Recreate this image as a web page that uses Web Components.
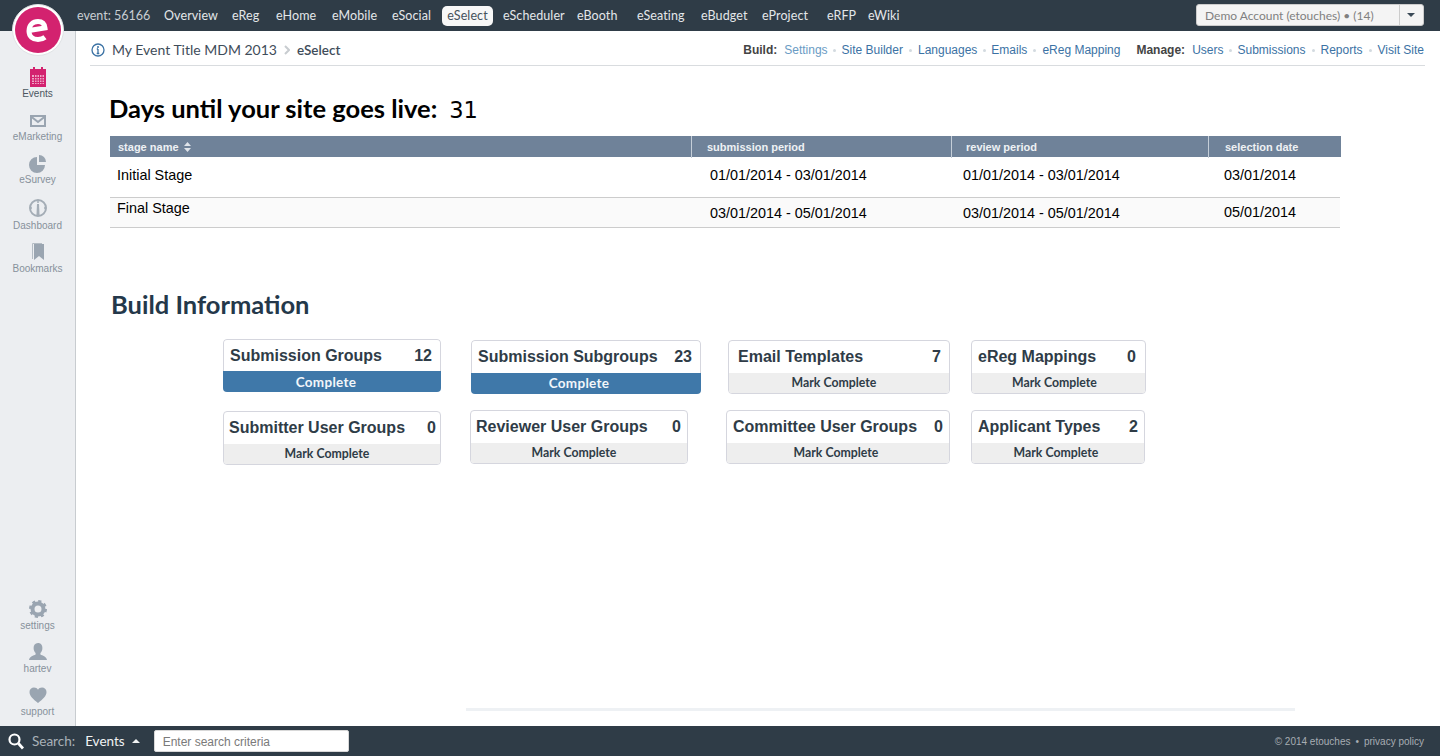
<!DOCTYPE html>
<html lang="en">
<head>
<meta charset="utf-8">
<title>eSelect</title>
<style>
    html, body { margin: 0; height: 100%; overflow: hidden; background: #fff; }
</style>
</head>
<body>
<et-app>
    <et-topbar slot="top"></et-topbar>
    <et-sidebar slot="side"></et-sidebar>
    <et-subnav slot="sub"></et-subnav>

    <et-countdown days="31">Days until your site goes live:</et-countdown>
    <et-stage-table></et-stage-table>
    <et-section-title>Build Information</et-section-title>

    <et-card-row style="margin-top: 20px">
        <et-build-card count="12" state="complete" width="218" left="147" up="1" shift="12">Submission Groups</et-build-card>
        <et-build-card count="23" state="complete" width="230" left="30" shift="14">Submission Subgroups</et-build-card>
        <et-build-card count="7" width="222" left="27" inset="9" shift="10">Email Templates</et-build-card>
        <et-build-card count="0" width="175" left="21" inset="6" trail="9" shift="8">eReg Mappings</et-build-card>
    </et-card-row>
    <et-card-row style="margin-top: 16px">
        <et-build-card count="0" width="218" left="147" down="1" inset="5" trail="4" shift="10">Submitter User Groups</et-build-card>
        <et-build-card count="0" width="218" left="29" inset="5" trail="6" shift="10">Reviewer User Groups</et-build-card>
        <et-build-card count="0" width="224" left="38" trail="6" shift="4">Committee User Groups</et-build-card>
        <et-build-card count="2" width="174" left="21" trail="6" shift="4">Applicant Types</et-build-card>
    </et-card-row>

    <et-footer-rule></et-footer-rule>
    <et-bottombar slot="bottom"></et-bottombar>
</et-app>

<script>
const SANS = '"Liberation Sans", Arial, sans-serif';
const HUMANIST = 'Lato, "Open Sans", sans-serif';

/**
 * Base class: attaches an open shadow root and fills it
 * with whatever render() returns.
 */
class EtElement extends HTMLElement {
    constructor() {
        super();
        this.$shadowDom = this.attachShadow({ mode: 'open' });
    }

    connectedCallback() {
        this.$shadowDom.innerHTML = this.render();
    }
}

// The page shell: top bar, side rail, content column, bottom bar.
class EtApp extends EtElement {
    render() {
        return `
            <style>
                :host {
                    display: grid;
                    grid-template-columns: 76px 1fr;
                    grid-template-rows: 31px 1fr 30px;
                    height: 756px;
                    font-family: ${SANS};
                }
                .top { grid-column: 1 / 3; position: relative; z-index: 2; }
                .side { grid-row: 2; min-height: 0; }
                .content { display: flex; flex-direction: column; min-height: 0; min-width: 0; }
                .bottom { grid-column: 1 / 3; }
            </style>
            <div class="top"><slot name="top"></slot></div>
            <div class="side"><slot name="side"></slot></div>
            <div class="content">
                <slot name="sub"></slot>
                <slot></slot>
            </div>
            <div class="bottom"><slot name="bottom"></slot></div>
        `;
    }
}

class EtTopbar extends EtElement {
    render() {
        // Each product tab with the width it takes up in the bar.
        const items = [['Overview', 68], ['eReg', 44], ['eHome', 56], ['eMobile', 60], ['eSocial', 50],
            ['eSelect', 51], ['eScheduler', 74], ['eBooth', 60], ['eSeating', 64], ['eBudget', 61],
            ['eProject', 65], ['eRFP', 41], ['eWiki', 40]];
        const links = items.map(([name, width]) =>
            `<a class="${name === 'eSelect' ? 'on' : ''}" style="width: ${width}px">${name}</a>`).join('');
        return `
            <style>
                :host {
                    display: flex;
                    align-items: center;
                    height: 31px;
                    padding: 0 16px 0 77px;
                    box-sizing: border-box;
                    background: #2f3c47;
                    font: 12.5px ${HUMANIST};
                    color: #e4e7ea;
                    position: relative;
                }
                .logo { position: absolute; left: 12px; top: 4px; width: 52px; height: 52px; }
                nav { display: flex; align-items: center; flex: 1; }
                a { flex: none; white-space: nowrap; letter-spacing: .1px; }
                .event { color: #c9ced3; width: 87px; letter-spacing: 0; }
                .on {
                    height: 20px;
                    margin-right: 10px;
                    line-height: 20px;
                    text-align: center;
                    background: #f7f7f7;
                    color: #46525c;
                    border-radius: 5px;
                }
                .account {
                    display: flex;
                    width: 228px;
                    height: 22px;
                    box-sizing: border-box;
                    margin-top: -1px;
                    background: #f4f4f4;
                    border: 1px solid #ccc;
                    border-radius: 3px;
                    font: 12px ${HUMANIST};
                    color: #808080;
                }
                .account span { flex: 1; padding-left: 8px; line-height: 21px; }
                .account i { width: 23px; border-left: 1px solid #ccc; position: relative; }
                .account i::after {
                    content: '';
                    position: absolute;
                    left: 7px;
                    top: 8px;
                    border: 4px solid transparent;
                    border-top: 4px solid #3b4a57;
                    border-bottom: 0;
                }
            </style>
            <svg class="logo" viewBox="0 0 52 52" aria-hidden="true">
                <circle cx="26" cy="26" r="25.5" fill="#fff" stroke="#dfe2e5"/>
                <circle cx="26" cy="26" r="23" fill="#d3226f"/>
                <path d="M17 26.500 L33 24 C32.500 19.500 29.500 17.500 26 17.500 C21 17.500 17 21 17 27 C17 32.500 21 35.500 26 35.500 C28.800 35.500 31 34.800 33 33.200" fill="none" stroke="#fff" stroke-width="5"/>
            </svg>
            <nav><a class="event">event: 56166</a>${links}</nav>
            <div class="account"><span>Demo Account (etouches) • (14)</span><i></i></div>
        `;
    }
}

// Icons of the side rail, all on a 20x20 box.
const RAIL_ICONS = {
    events: `<path fill="#d3226f" d="M2 2h3V0h2v2h6V0h2v2h3v18H2z"/>
        <path fill="#efa6c6" d="M4 8h12v9H4z"/>
        <path stroke="#d3226f" stroke-width="1" d="M4 10.500h12M4 13h12M4 15.500h12M6.500 8v9M9 8v9M11.500 8v9M14 8v9"/>`,
    mail: `<rect x="3" y="6" width="14" height="10" fill="none" stroke="#9aa5b1" stroke-width="2"/>
        <path d="M3 6.500l7 5.500 7-5.500" fill="none" stroke="#9aa5b1" stroke-width="2"/>`,
    pie: `<path fill="#9aa5b1" d="M9 4a8 8 0 1 0 8 8H9z"/><path fill="#9aa5b1" d="M11 2a7 7 0 0 1 7 7h-7z"/>`,
    gauge: `<circle cx="10" cy="9" r="8" fill="none" stroke="#a4adb6" stroke-width="2"/>
        <path d="M10 1v3M2 9h2M16 9h2" stroke="#a4adb6" stroke-width="1.500"/>
        <path d="M9 5h2l.6 12H8.400z" fill="#a4adb6"/>`,
    bookmark: `<path fill="#9aa5b1" d="M6 2h10v16l-5-4-5 4z"/><path fill="none" stroke="#b4bcc4" d="M4.500 17V1.500H14"/>`,
    gear: `<circle cx="10" cy="10" r="5.500" fill="none" stroke="#9aa5b1" stroke-width="4"/>
        <circle cx="10" cy="10" r="7.500" fill="none" stroke="#9aa5b1" stroke-width="3" stroke-dasharray="3 2.890"/>`,
    user: `<path fill="#9aa5b1" d="M10 1c3 0 4.400 2.200 4.400 5 0 2.400-1 4-2 5v1.500c2 1 6 2 6.600 5.500H1c.6-3.500 4.600-4.500 6.600-5.500V11c-1-1-2-2.600-2-5 0-2.800 1.400-5 4.400-5z"/>`,
    heart: `<path fill="#9aa5b1" d="M10 18C5 14 1.500 11 1.500 7 1.500 4 3.700 2.500 6 2.500c1.800 0 3.200.8 4 2.200.8-1.400 2.200-2.200 4-2.200 2.300 0 4.500 1.500 4.500 4.500 0 4-3.500 7-8.500 11z"/>`
};

class EtRailItem extends EtElement {
    render() {
        return `
            <style>
                :host {
                    display: flex;
                    flex-direction: column;
                    align-items: center;
                    height: 43px;
                    font: 10px/12px ${SANS};
                    color: #87919b;
                    box-sizing: border-box;
                }
                :host([active]) { color: #4b5660; }
                :host([icon="gauge"]) { margin-top: 3px; }
                svg { width: 20px; height: 20px; flex: none; margin-bottom: 1px; }
            </style>
            <svg viewBox="0 0 20 20" aria-hidden="true">${RAIL_ICONS[this.getAttribute('icon')]}</svg>
            <slot></slot>
        `;
    }
}

class EtSidebar extends EtElement {
    render() {
        return `
            <style>
                :host {
                    display: flex;
                    flex-direction: column;
                    height: 100%;
                    width: 76px;
                    box-sizing: border-box;
                    padding-top: 36px;
                    background: #eceef1;
                    border-right: 1px solid #c8ccd0;
                }
                .foot { margin-top: auto; }
                .foot et-rail-item:last-child { height: 41px; }
            </style>
            <et-rail-item icon="events" active>Events</et-rail-item>
            <et-rail-item icon="mail">eMarketing</et-rail-item>
            <et-rail-item icon="pie">eSurvey</et-rail-item>
            <et-rail-item icon="gauge">Dashboard</et-rail-item>
            <et-rail-item icon="bookmark">Bookmarks</et-rail-item>
            <div class="foot">
                <et-rail-item icon="gear">settings</et-rail-item>
                <et-rail-item icon="user">hartev</et-rail-item>
                <et-rail-item icon="heart">support</et-rail-item>
            </div>
        `;
    }
}

class EtSubnav extends EtElement {
    render() {
        return `
            <style>
                :host {
                    display: flex;
                    align-items: center;
                    height: 35px;
                    margin: 0 15px 0 14px;
                    box-sizing: border-box;
                    padding: 4px 1px 0 1px;
                    border-bottom: 1px solid #d9dcdf;
                    font: 12px ${SANS};
                    color: #3b72a4;
                }
                .crumb {
                    display: flex;
                    align-items: center;
                    flex: 1;
                    margin-top: -1px;
                    font: 14px ${HUMANIST};
                    color: #3f4d5a;
                }
                .crumb svg { margin-right: 7px; }
                .crumb .arrow { margin: 0 7px 0 7px; }
                .crumb b { font: 600 13.500px ${HUMANIST}; }
                .links { display: flex; align-items: center; white-space: nowrap; }
                .links b { color: #444; margin-right: 7px; }
                .links i { width: 3px; height: 3px; margin: 0 6px; border-radius: 50%; background: #d3dae0; }
                .links i.tight { margin-right: 5px; }
                .links .first { color: #6a9bc4; margin-right: -1px; }
                .manage { margin-left: 16px; }
            </style>
            <div class="crumb">
                <svg width="14" height="14" viewBox="0 0 14 14" aria-hidden="true">
                    <circle cx="7" cy="7" r="6" fill="none" stroke="#3b72a4" stroke-width="1.300"/>
                    <path d="M7 6v4.500M5.700 10.500h2.600M5.800 6h1.200" stroke="#3b72a4" stroke-width="1.300" fill="none"/>
                    <circle cx="7" cy="3.900" r="1" fill="#3b72a4"/>
                </svg>
                <span>My Event Title MDM 2013</span>
                <svg class="arrow" width="6" height="10" viewBox="0 0 6 10" aria-hidden="true">
                    <path d="M1 1l4 4-4 4" fill="none" stroke="#c8ccd0" stroke-width="2"/>
                </svg>
                <b>eSelect</b>
            </div>
            <div class="links">
                <b>Build:</b><span class="first">Settings</span><i></i><span>Site Builder</span><i></i><span>Languages</span><i class="tight"></i><span>Emails</span><i></i><span>eReg Mapping</span>
                <b class="manage">Manage:</b><span>Users</span><i class="tight"></i><span>Submissions</span><i></i><span>Reports</span><i></i><span>Visit Site</span>
            </div>
        `;
    }
}

class EtCountdown extends EtElement {
    render() {
        return `
            <style>
                :host {
                    display: flex;
                    align-items: baseline;
                    margin: 26px 0 0 33px;
                    height: 44px;
                    font: 700 25.500px/32px ${HUMANIST};
                    color: #000;
                }
                span { font: 400 22.500px/32px "DejaVu Sans", sans-serif; margin-left: 12px; }
            </style>
            <slot></slot><span>${this.getAttribute('days')}</span>
        `;
    }
}

class EtStageTable extends EtElement {
    render() {
        return `
            <style>
                :host { display: block; width: 1231px; margin-left: 34px; font-family: ${SANS}; }
                .row { display: grid; grid-template-columns: 581px 260px 257px 133px; }
                .head {
                    height: 21px;
                    background: #6f8299;
                    color: #eef1f4;
                    font: 700 11px/22px ${SANS};
                }
                .head div + div { border-left: 1px solid #c5ced8; }
                .head div:nth-child(1) { padding-left: 8px; }
                .head div:nth-child(2) { padding-left: 15px; }
                .head div:nth-child(3) { padding-left: 14px; }
                .head div:nth-child(4) { padding-left: 16px; }
                .body { color: #000; font-size: 14.400px; border-bottom: 1px solid #ccc; margin-right: 1px; }
                .body div:nth-child(1) { padding-left: 7px; }
                .body div:nth-child(2) { padding-left: 19px; }
                .body div:nth-child(3) { padding-left: 12px; }
                .body div:nth-child(4) { padding-left: 16px; }
                .one { height: 41px; box-sizing: border-box; line-height: 36px; }
                .two { height: 30px; box-sizing: border-box; line-height: 20px; background: #fafafa; }
                .two div + div { padding-top: 5px; }
                .two div:nth-child(4) { padding-top: 4px; }
                .sort { display: inline-block; vertical-align: -1px; margin-left: 2px; }
            </style>
            <div class="row head">
                <div>stage name <svg class="sort" width="7" height="10" viewBox="0 0 7 10" aria-hidden="true"><path fill="#dfe4ea" d="M3.500 0L7 4H0zM3.500 10L0 6h7z"/></svg></div>
                <div>submission period</div><div>review period</div><div>selection date</div>
            </div>
            <div class="row body one">
                <div>Initial Stage</div><div>01/01/2014 - 03/01/2014</div><div>01/01/2014 - 03/01/2014</div><div>03/01/2014</div>
            </div>
            <div class="row body two">
                <div>Final Stage</div><div>03/01/2014 - 05/01/2014</div><div>03/01/2014 - 05/01/2014</div><div>05/01/2014</div>
            </div>
        `;
    }
}

class EtSectionTitle extends EtElement {
    render() {
        return `
            <style>
                :host {
                    display: block;
                    margin: 60px 0 0 35px;
                    font: 700 25.500px/32px ${HUMANIST};
                    color: #24384a;
                }
            </style>
            <slot></slot>
        `;
    }
}

class EtCardRow extends EtElement {
    render() {
        return `
            <style>
                :host { display: flex; align-items: flex-start; }
            </style>
            <slot></slot>
        `;
    }
}

/**
 * One tile of the build information block.
 * Attributes: count, state, width, left (gap before the tile),
 * inset / trail (title row padding), shift (footer label pulled left),
 * up / down (small nudge of the tile).
 */
class EtBuildCard extends EtElement {
    render() {
        const done = this.getAttribute('state') === 'complete';
        const inset = this.getAttribute('inset') || 6;
        const trail = this.getAttribute('trail') || 8;
        const shift = this.getAttribute('shift') || 0;
        const up = Number(this.getAttribute('up')) || 0;
        const down = Number(this.getAttribute('down')) || 0;
        return `
            <style>
                :host {
                    display: block;
                    flex: none;
                    width: ${this.getAttribute('width')}px;
                    margin-left: ${this.getAttribute('left')}px;
                    margin-top: ${down - up}px;
                    box-sizing: border-box;
                    border: 1px solid #d5d6de;
                    border-radius: 4px;
                    overflow: hidden;
                }
                /* A finished tile: the blue band runs to the tile's edge. */
                :host([state="complete"]) { border: 0; }
                :host([state="complete"]) .top {
                    border: 1px solid #d5d6de;
                    border-bottom: 0;
                    border-radius: 4px 4px 0 0;
                    height: ${32 - up}px;
                }
                .top {
                    display: flex;
                    justify-content: space-between;
                    height: 32px;
                    padding: 0 ${trail}px 0 ${inset}px;
                    font: 700 16px/31px ${SANS};
                    color: #2f3c47;
                }
                .foot {
                    height: 20px;
                    padding-right: ${shift}px;
                    text-align: center;
                    font: 700 12.300px/19px ${HUMANIST};
                    background: #eeeeee;
                    color: #2f3c47;
                }
                .foot.done {
                    height: 21px;
                    background: #3f78a9;
                    color: #f2f6fa;
                    font-size: 13.500px;
                    line-height: ${20 + up * 2}px;
                    letter-spacing: .3px;
                }
            </style>
            <div class="top"><span><slot></slot></span><span>${this.getAttribute('count')}</span></div>
            <div class="foot ${done ? 'done' : ''}">${done ? 'Complete' : 'Mark Complete'}</div>
        `;
    }
}

class EtFooterRule extends EtElement {
    render() {
        return `
            <style>
                :host {
                    display: block;
                    width: 829px;
                    height: 3px;
                    margin: auto 0 15px 390px;
                    background: #eef1f4;
                }
            </style>
        `;
    }
}

class EtBottombar extends EtElement {
    render() {
        return `
            <style>
                :host {
                    display: flex;
                    align-items: center;
                    height: 30px;
                    padding: 0 16px 0 8px;
                    box-sizing: border-box;
                    background: #2f3c47;
                    font: 13.500px ${HUMANIST};
                    color: #a9b1b8;
                }
                .glass { margin-right: 8px; }
                .scope { color: #f1f3f4; margin-left: 10px; }
                .caret {
                    margin: 0 14px 0 7px;
                    border: 4px solid transparent;
                    border-bottom: 4px solid #f1f3f4;
                    border-top: 0;
                }
                input {
                    width: 195px;
                    height: 22px;
                    box-sizing: border-box;
                    padding: 1px 8px 0;
                    border: 1px solid #d8d8d8;
                    border-radius: 2px;
                    background: #fff;
                    font: 12px ${SANS};
                    outline: none;
                }
                input::placeholder { color: #7a7a7a; opacity: 1; }
                .legal { margin-left: auto; font: 10px ${SANS}; color: #a7adb3; }
                .legal i { font-style: normal; margin: 0 5px; }
            </style>
            <svg class="glass" width="16" height="17" viewBox="0 0 16 17" aria-hidden="true">
                <circle cx="6.500" cy="6.500" r="5" fill="none" stroke="#fff" stroke-width="2.200"/>
                <path d="M10.500 10.500L15 15.500" stroke="#fff" stroke-width="2.800"/>
            </svg>
            <span>Search:</span><span class="scope">Events</span><span class="caret"></span>
            <input type="text" placeholder="Enter search criteria">
            <div class="legal">© 2014 etouches<i>•</i>privacy policy</div>
        `;
    }
}

// Children first, so the shell's slots are filled by defined elements.
customElements.define('et-rail-item', EtRailItem);
customElements.define('et-topbar', EtTopbar);
customElements.define('et-sidebar', EtSidebar);
customElements.define('et-subnav', EtSubnav);
customElements.define('et-countdown', EtCountdown);
customElements.define('et-stage-table', EtStageTable);
customElements.define('et-section-title', EtSectionTitle);
customElements.define('et-build-card', EtBuildCard);
customElements.define('et-card-row', EtCardRow);
customElements.define('et-footer-rule', EtFooterRule);
customElements.define('et-bottombar', EtBottombar);
customElements.define('et-app', EtApp);
</script>
</body>
</html>
